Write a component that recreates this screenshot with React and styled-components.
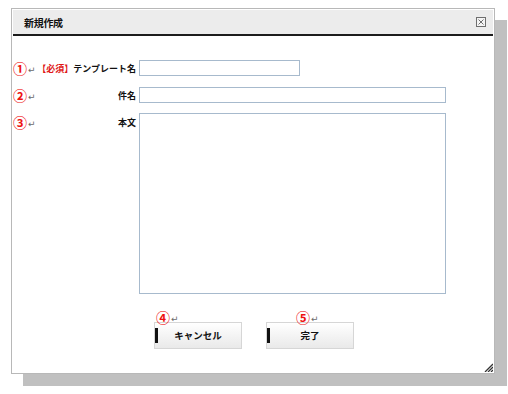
import React from 'react';
import styled, { createGlobalStyle } from 'styled-components';

const GlobalStyle = createGlobalStyle`
  html, body {
    margin: 0;
    padding: 0;
    background: #fff;
  }
  body {
    font-family: "Noto Sans CJK JP", "Noto Sans", sans-serif;
    color: #111;
  }
`;

const Page = styled.div`
  box-sizing: border-box;
  min-height: 394px;
  padding: 8px 0 0 11px;
`;

const Dialog = styled.div`
  position: relative;
  box-sizing: border-box;
  width: 484px;
  height: 366px;
  padding: 1px;
  border: 1px solid #b8b8b8;
  background: #fff;
  box-shadow: 12px 12px 0 #c0c0c0;
  display: flex;
  flex-direction: column;
`;

const Header = styled.div`
  height: 24px;
  flex: none;
  background: #ececec;
  border-bottom: 2px solid #1c1c1c;
  display: flex;
  align-items: center;
  justify-content: space-between;
  padding: 0 7px 0 11px;
`;

const Title = styled.span`
  font-size: 10px;
  font-weight: bold;
  letter-spacing: -0.3px;
`;

const CloseButton = styled.button`
  border: 0;
  padding: 0;
  background: none;
  display: flex;
  cursor: pointer;
`;

const Form = styled.div`
  display: grid;
  grid-template-columns: 123px 1fr;
  column-gap: 3px;
  row-gap: 11px;
  padding-top: 24px;
`;

const LabelCell = styled.div`
  display: flex;
  justify-content: space-between;
  align-items: center;
  height: 16px;
  font-size: 9px;
  font-weight: bold;
  white-space: nowrap;
`;

const FieldCell = styled.div`
  display: flex;
  align-items: flex-start;
`;

const Marker = styled.span`
  display: inline-flex;
  align-items: flex-end;
  color: #ee1111;
  font-size: 14px;
  line-height: 14px;
  font-weight: bold;
`;

const Return = styled.span`
  font-family: "DejaVu Sans", sans-serif;
  color: #6a6a6a;
  font-size: 9px;
  line-height: 9px;
  font-weight: normal;
  margin-left: 1px;
`;

const Required = styled.span`
  color: #e01818;
`;

const TextInput = styled.input`
  box-sizing: border-box;
  width: ${({ $w }) => $w}px;
  height: 16px;
  border: 1px solid #a7bacd;
  padding: 0 2px;
  margin: 0;
  font-size: 9px;
  outline: none;
`;

const TextArea = styled.textarea`
  box-sizing: border-box;
  width: 307px;
  height: 181px;
  margin: -1px 0 0;
  border: 1px solid #a7bacd;
  padding: 2px;
  resize: none;
  outline: none;
`;

const ButtonRow = styled.div`
  display: flex;
  gap: 24px;
  padding: 26px 0 0 141px;
`;

const ButtonWrap = styled.div`
  position: relative;
`;

const ButtonMarker = styled.div`
  position: absolute;
  left: ${({ $left }) => $left}px;
  top: -10px;
  display: flex;
  align-items: flex-end;
  z-index: 1;
`;

const ActionButton = styled.button`
  position: relative;
  box-sizing: border-box;
  width: 88px;
  height: 27px;
  border: 1px solid #d6d6d6;
  background: linear-gradient(#ffffff, #e9e9e9);
  font-family: "Noto Sans CJK JP", sans-serif;
  font-size: 9.5px;
  font-weight: bold;
  color: #111;
  padding: 0;
  cursor: pointer;

  &::before {
    content: '';
    position: absolute;
    left: 0;
    top: 5px;
    width: 3px;
    height: 15px;
    background: #111;
  }
`;

const Grip = styled.svg`
  position: absolute;
  right: 1px;
  bottom: 1px;
`;

const Num = ({ n }) => (
  <Marker>
    {n}
    <Return>↵</Return>
  </Marker>
);

const fields = [
  { n: '①', label: 'テンプレート名', required: true, width: 161 },
  { n: '②', label: '件名', width: 307 },
];

export default function App() {
  return (
    <>
      <GlobalStyle />
      <Page>
        <Dialog>
          <Header>
            <Title>新規作成</Title>
            <CloseButton aria-label="閉じる">
              <svg width="10" height="10" viewBox="0 0 10 10">
                <rect x="0.5" y="0.5" width="9" height="9" fill="#f4f4f4" stroke="#6e6e6e" />
                <path d="M2.5 2.5 L7.5 7.5 M7.5 2.5 L2.5 7.5" stroke="#6e6e6e" strokeWidth="1" />
              </svg>
            </CloseButton>
          </Header>
          <Form>
            {fields.map((f) => (
              <React.Fragment key={f.n}>
                <LabelCell>
                  <Num n={f.n} />
                  <span>
                    {f.required && <Required>【必須】</Required>}
                    {f.label}
                  </span>
                </LabelCell>
                <FieldCell>
                  <TextInput $w={f.width} />
                </FieldCell>
              </React.Fragment>
            ))}
            <LabelCell>
              <Num n="③" />
              <span>本文</span>
            </LabelCell>
            <FieldCell>
              <TextArea />
            </FieldCell>
          </Form>
          <ButtonRow>
            <ButtonWrap>
              <ButtonMarker $left={2}>
                <Num n="④" />
              </ButtonMarker>
              <ActionButton>キャンセル</ActionButton>
            </ButtonWrap>
            <ButtonWrap>
              <ButtonMarker $left={30}>
                <Num n="⑤" />
              </ButtonMarker>
              <ActionButton>完了</ActionButton>
            </ButtonWrap>
          </ButtonRow>
          <Grip width="9" height="9" viewBox="0 0 9 9">
            <path d="M1 9 L9 1 M4 9 L9 4 M7 9 L9 7" stroke="#333" strokeWidth="1.3" />
          </Grip>
        </Dialog>
      </Page>
    </>
  );
}
